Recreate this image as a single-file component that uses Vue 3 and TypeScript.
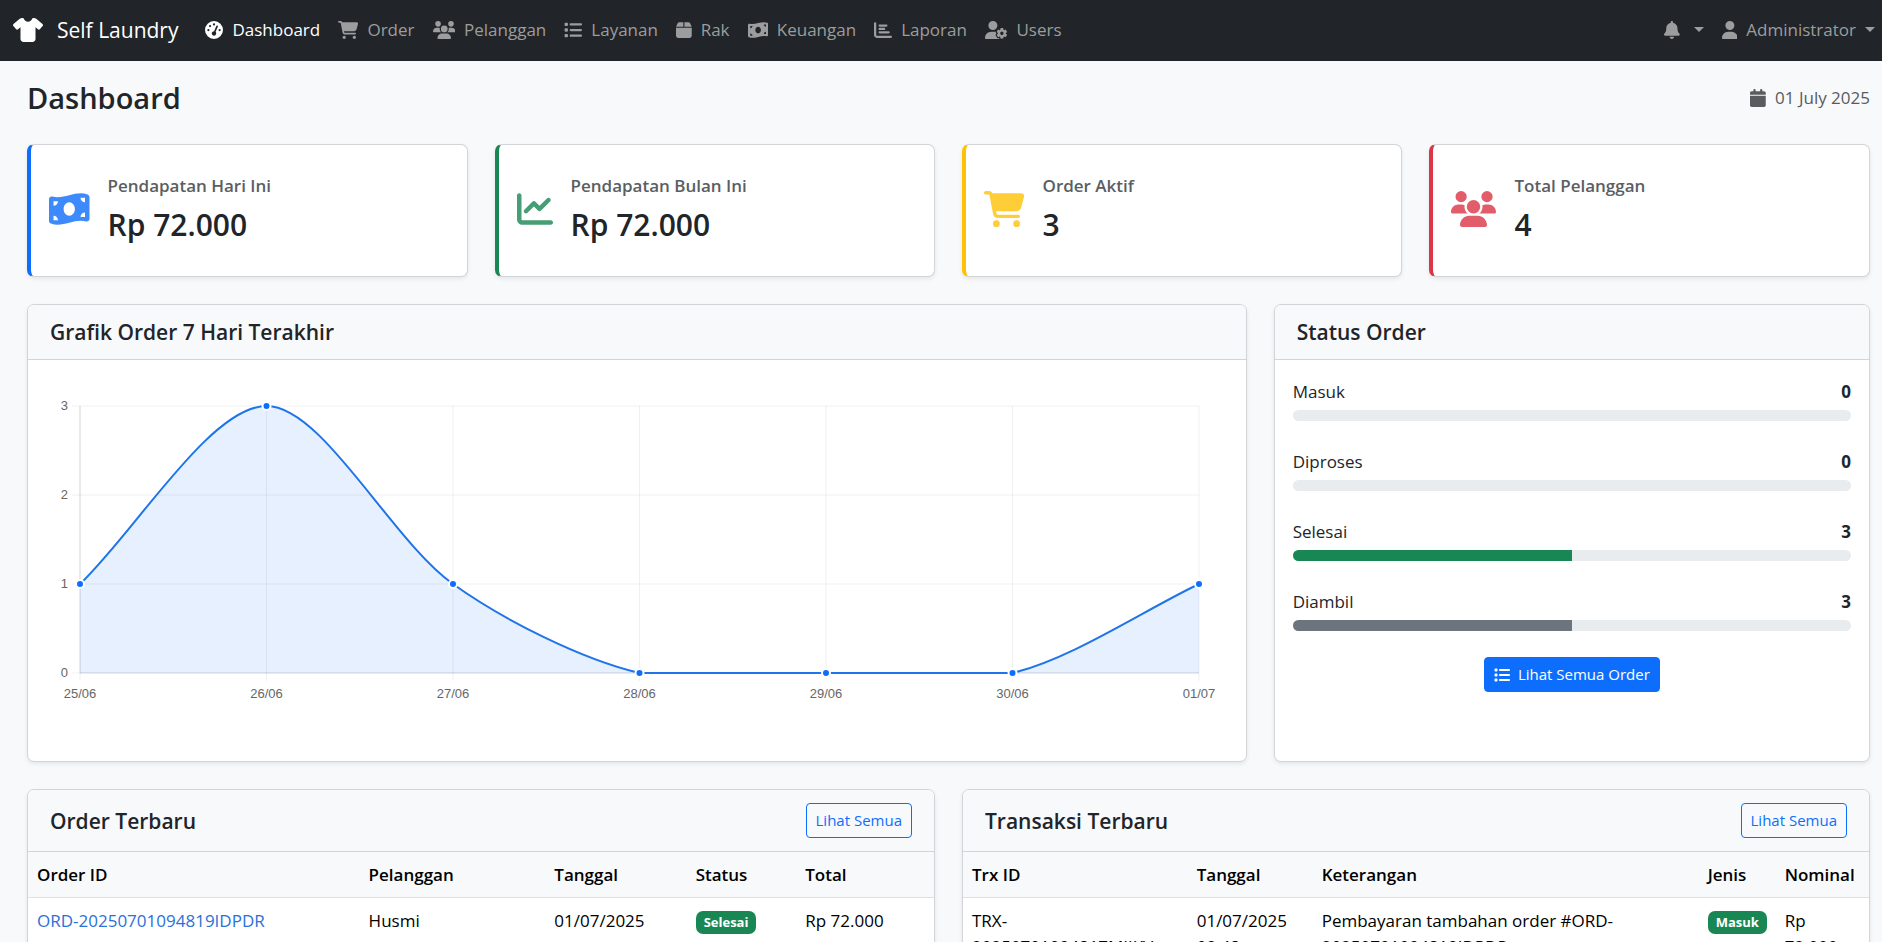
<script setup lang="ts">
import { computed, onBeforeUnmount, onMounted, ref } from 'vue'

interface Icon {
  width: number
  path: string
}

const icons: Record<string, Icon> = {
  shirt: { width: 640, path: 'M211.8 0c7.8 0 14.3 5.7 16.7 13.2C240.8 51.9 277.1 80 320 80s79.2-28.1 91.5-66.8C413.9 5.7 420.4 0 428.2 0h12.6c22.5 0 44.2 7.9 61.5 22.3L628.5 127.4c6.6 5.5 10.7 13.5 11.4 22.1s-2.1 17.1-7.8 23.6l-56 64c-11.4 13.1-31.2 14.6-44.6 3.5L480 197.7V448c0 35.3-28.7 64-64 64H224c-35.3 0-64-28.7-64-64V197.7l-51.5 42.9c-13.3 11.1-33.1 9.6-44.6-3.5l-56-64c-5.7-6.5-8.5-15-7.8-23.6s4.8-16.6 11.4-22.1L137.7 22.3C155 7.9 176.7 0 199.2 0h12.6z' },
  gauge: { width: 512, path: 'M0 256a256 256 0 1 1 512 0A256 256 0 1 1 0 256zM288 96a32 32 0 1 0 -64 0 32 32 0 1 0 64 0zM256 416c35.3 0 64-28.7 64-64c0-17.4-6.9-33.1-18.1-44.6L366 161.7c5.3-12.1-.2-26.3-12.3-31.6s-26.3 .2-31.6 12.3L257.9 288c-.6 0-1.3 0-1.9 0c-35.3 0-64 28.7-64 64s28.7 64 64 64zM176 144a32 32 0 1 0 -64 0 32 32 0 1 0 64 0zM96 288a32 32 0 1 0 0-64 32 32 0 1 0 0 64zm352-32a32 32 0 1 0 -64 0 32 32 0 1 0 64 0z' },
  cart: { width: 576, path: 'M0 24C0 10.7 10.7 0 24 0H69.5c22 0 41.5 12.8 50.6 32h411c26.3 0 45.5 25 38.6 50.4l-41 152.3c-8.5 31.4-37 53.3-69.5 53.3H170.7l5.4 28.5c2.2 11.3 12.1 19.5 23.6 19.5H488c13.3 0 24 10.7 24 24s-10.7 24-24 24H199.7c-34.6 0-64.3-24.6-70.7-58.5L77.4 54.5c-.7-3.8-4-6.5-7.9-6.5H24C10.7 48 0 37.3 0 24zM128 464a48 48 0 1 1 96 0 48 48 0 1 1 -96 0zm336-48a48 48 0 1 1 0 96 48 48 0 1 1 0-96z' },
  users: { width: 640, path: 'M144 0a80 80 0 1 1 0 160A80 80 0 1 1 144 0zM512 0a80 80 0 1 1 0 160A80 80 0 1 1 512 0zM0 298.7C0 239.8 47.8 192 106.7 192h42.7c15.9 0 31 3.5 44.6 9.7c-1.3 7.2-1.9 14.7-1.9 22.3c0 38.2 16.8 72.5 43.3 96c-.2 0-.4 0-.7 0H21.3C9.6 320 0 310.4 0 298.7zM405.3 320c-.2 0-.4 0-.7 0c26.6-23.5 43.3-57.8 43.3-96c0-7.6-.7-15-1.9-22.3c13.6-6.3 28.7-9.7 44.6-9.7h42.7C592.2 192 640 239.8 640 298.7c0 11.8-9.6 21.3-21.3 21.3H405.3zM224 224a96 96 0 1 1 192 0 96 96 0 1 1 -192 0zM128 485.3C128 411.7 187.7 352 261.3 352H378.7C452.3 352 512 411.7 512 485.3c0 14.7-11.9 26.7-26.7 26.7H154.7c-14.7 0-26.7-11.9-26.7-26.7z' },
  list: { width: 512, path: 'M40 48C26.7 48 16 58.7 16 72v48c0 13.3 10.7 24 24 24H88c13.3 0 24-10.7 24-24V72c0-13.3-10.7-24-24-24H40zM192 64c-17.7 0-32 14.3-32 32s14.3 32 32 32H480c17.7 0 32-14.3 32-32s-14.3-32-32-32H192zm0 160c-17.7 0-32 14.3-32 32s14.3 32 32 32H480c17.7 0 32-14.3 32-32s-14.3-32-32-32H192zm0 160c-17.7 0-32 14.3-32 32s14.3 32 32 32H480c17.7 0 32-14.3 32-32s-14.3-32-32-32H192zM16 232v48c0 13.3 10.7 24 24 24H88c13.3 0 24-10.7 24-24V232c0-13.3-10.7-24-24-24H40c-13.3 0-24 10.7-24 24zM40 368c-13.3 0-24 10.7-24 24v48c0 13.3 10.7 24 24 24H88c13.3 0 24-10.7 24-24V392c0-13.3-10.7-24-24-24H40z' },
  box: { width: 448, path: 'M50.7 58.5L0 160H208V32H93.7C75.5 32 58.9 42.3 50.7 58.5zM240 160H448L397.3 58.5C389.1 42.3 372.5 32 354.3 32H240V160zm208 32H0V416c0 35.3 28.7 64 64 64H384c35.3 0 64-28.7 64-64V192z' },
  money: { width: 576, path: 'M0 112.5V422.3c0 18 10.1 35 27 41.3c87 32.5 174 10.3 261-11.9c79.8-20.3 159.6-40.7 239.3-18.9c23 6.3 48.7-9.5 48.7-33.4V89.7c0-18-10.1-35-27-41.3C462 15.9 375 38.1 288 60.3C208.2 80.6 128.4 100.9 48.7 79.1C25.6 72.8 0 88.6 0 112.5zM288 352c-44.2 0-80-43-80-96s35.8-96 80-96s80 43 80 96s-35.8 96-80 96zM64 352c35.3 0 64 28.7 64 64H64V352zm64-208c0 35.3-28.7 64-64 64V144h64zM512 304v64H448c0-35.3 28.7-64 64-64zM448 96h64v64c-35.3 0-64-28.7-64-64z' },
  chartBar: { width: 512, path: 'M32 32c17.7 0 32 14.3 32 32V400c0 8.8 7.2 16 16 16H480c17.7 0 32 14.3 32 32s-14.3 32-32 32H80c-44.2 0-80-35.8-80-80V64C0 46.3 14.3 32 32 32zm96 96c0-17.7 14.3-32 32-32l192 0c17.7 0 32 14.3 32 32s-14.3 32-32 32H160c-17.7 0-32-14.3-32-32zm32 64H288c17.7 0 32 14.3 32 32s-14.3 32-32 32H160c-17.7 0-32-14.3-32-32s14.3-32 32-32zm0 96H416c17.7 0 32 14.3 32 32s-14.3 32-32 32H160c-17.7 0-32-14.3-32-32s14.3-32 32-32z' },
  chartLine: { width: 512, path: 'M64 64c0-17.7-14.3-32-32-32S0 46.3 0 64V400c0 44.2 35.8 80 80 80H480c17.7 0 32-14.3 32-32s-14.3-32-32-32H80c-8.8 0-16-7.2-16-16V64zm406.6 86.6c12.5-12.5 12.5-32.8 0-45.3s-32.8-12.5-45.3 0L320 210.7l-57.4-57.4c-12.5-12.5-32.8-12.5-45.3 0l-112 112c-12.5 12.5-12.5 32.8 0 45.3s32.8 12.5 45.3 0L240 221.3l57.4 57.4c12.5 12.5 32.8 12.5 45.3 0l128-128z' },
  userGear: { width: 640, path: 'M224 0a128 128 0 1 1 0 256A128 128 0 1 1 224 0zM178.3 304h91.4c11.8 0 23.4 1.2 34.5 3.3c-2.1 18.5 7.4 35.6 21.8 44.8c-16.6 10.6-26.7 31.6-20 53.3c4 12.9 9.4 25.5 16.4 37.6s15.2 23.1 24.4 33c15.7 16.9 39.6 18.4 57.2 8.7v.9c0 9.2 2.7 18.5 7.9 26.3H29.7C13.3 512 0 498.7 0 482.3C0 383.8 79.8 304 178.3 304zM436 218.2c0-7 4.5-13.3 11.3-14.8c10.5-2.4 21.5-3.7 32.7-3.7s22.2 1.3 32.7 3.7c6.8 1.5 11.3 7.8 11.3 14.8v30.6c7.9 3.4 15.4 7.7 22.3 12.8l24.9-14.3c6.1-3.5 13.7-2.7 18.5 2.4c7.6 8.1 14.3 17.2 20.1 27.2s10.3 20.4 13.5 31c2.1 6.7-1.1 13.7-7.2 17.2l-25 14.4c.4 4 .7 8.1 .7 12.3s-.2 8.2-.7 12.3l25 14.4c6.1 3.5 9.2 10.5 7.2 17.2c-3.3 10.6-7.8 21-13.5 31s-12.5 19.1-20.1 27.2c-4.8 5.1-12.5 5.9-18.5 2.4l-24.9-14.3c-6.9 5.1-14.3 9.4-22.3 12.8l0 30.6c0 7-4.5 13.3-11.3 14.8c-10.5 2.4-21.5 3.7-32.7 3.7s-22.2-1.3-32.7-3.7c-6.8-1.5-11.3-7.8-11.3-14.8V454.8c-8-3.4-15.6-7.7-22.5-12.9l-24.7 14.3c-6.1 3.5-13.7 2.7-18.5-2.4c-7.6-8.1-14.3-17.2-20.1-27.2s-10.3-20.4-13.5-31c-2.1-6.7 1.1-13.7 7.2-17.2l24.8-14.3c-.4-4.1-.7-8.2-.7-12.4s.2-8.3 .7-12.4L343.8 325c-6.1-3.5-9.2-10.5-7.2-17.2c3.3-10.6 7.7-21 13.5-31s12.5-19.1 20.1-27.2c4.8-5.1 12.4-5.9 18.5-2.4l24.8 14.3c6.9-5.1 14.5-9.4 22.5-12.9V218.2zm92.1 133.5a48.1 48.1 0 1 0 -96.1 0 48.1 48.1 0 1 0 96.1 0z' },
  bell: { width: 448, path: 'M224 0c-17.7 0-32 14.3-32 32V51.2C119 66 64 130.6 64 208v18.8c0 47-17.3 92.4-48.5 127.6l-7.4 8.3c-8.4 9.4-10.4 22.9-5.3 34.4S19.4 416 32 416H416c12.6 0 24-7.4 29.2-18.9s3.1-25-5.3-34.4l-7.4-8.3C401.3 319.2 384 273.9 384 226.8V208c0-77.4-55-142-128-156.8V32c0-17.7-14.3-32-32-32zm45.3 493.3c12-12 18.7-28.3 18.7-45.3H224 160c0 17 6.7 33.3 18.7 45.3s28.3 18.7 45.3 18.7s33.3-6.7 45.3-18.7z' },
  user: { width: 448, path: 'M224 256A128 128 0 1 0 224 0a128 128 0 1 0 0 256zm-45.7 48C79.8 304 0 383.8 0 482.3C0 498.7 13.3 512 29.7 512H418.3c16.4 0 29.7-13.3 29.7-29.7C448 383.8 368.2 304 269.7 304H178.3z' },
  calendar: { width: 448, path: 'M96 32V64H48C21.5 64 0 85.5 0 112v48H448V112c0-26.5-21.5-48-48-48H352V32c0-17.7-14.3-32-32-32s-32 14.3-32 32V64H160V32c0-17.7-14.3-32-32-32S96 14.3 96 32zM448 192H0V464c0 26.5 21.5 48 48 48H400c26.5 0 48-21.5 48-48V192z' },
}

const viewBox = (name: string) => `0 0 ${icons[name].width} 512`

const navItems = [
  { label: 'Dashboard', icon: 'gauge', active: true },
  { label: 'Order', icon: 'cart', active: false },
  { label: 'Pelanggan', icon: 'users', active: false },
  { label: 'Layanan', icon: 'list', active: false },
  { label: 'Rak', icon: 'box', active: false },
  { label: 'Keuangan', icon: 'money', active: false },
  { label: 'Laporan', icon: 'chartBar', active: false },
  { label: 'Users', icon: 'userGear', active: false },
]

const stats = [
  { label: 'Pendapatan Hari Ini', value: 'Rp 72.000', icon: 'money', tone: 'primary' },
  { label: 'Pendapatan Bulan Ini', value: 'Rp 72.000', icon: 'chartLine', tone: 'success' },
  { label: 'Order Aktif', value: '3', icon: 'cart', tone: 'warning' },
  { label: 'Total Pelanggan', value: '4', icon: 'users', tone: 'danger' },
]

const statuses = [
  { label: 'Masuk', count: 0, tone: 'info' },
  { label: 'Diproses', count: 0, tone: 'info' },
  { label: 'Selesai', count: 3, tone: 'success' },
  { label: 'Diambil', count: 3, tone: 'secondary' },
]
const statusTotal = statuses.reduce((sum, s) => sum + s.count, 0)
const share = (count: number) => (count / statusTotal) * 100

const orders = [
  { id: 'ORD-20250701094819IDPDR', customer: 'Husmi', date: '01/07/2025', status: 'Selesai', total: 'Rp 72.000' },
]
const transactions = [
  { id: 'TRX-20250701094817MIJKV', date: '01/07/2025 09:48', note: 'Pembayaran tambahan order #ORD-20250701094819IDPDR', kind: 'Masuk', amount: 'Rp 72.000' },
]

/* Line chart */
const days = ['25/06', '26/06', '27/06', '28/06', '29/06', '30/06', '01/07']
const counts = [1, 3, 1, 0, 0, 0, 1]
const ticks = [3, 2, 1, 0]
const chartHeight = 360
const area = { left: 34, right: 29, top: 28, bottom: 295 }
const tension = 0.3

const chartBox = ref<HTMLElement | null>(null)
const chartWidth = ref(1182)
let observer: ResizeObserver | undefined

onMounted(() => {
  if (!chartBox.value) return
  chartWidth.value = chartBox.value.clientWidth
  observer = new ResizeObserver(() => {
    if (chartBox.value) chartWidth.value = chartBox.value.clientWidth
  })
  observer.observe(chartBox.value)
})
onBeforeUnmount(() => observer?.disconnect())

const yOf = (value: number) => area.bottom - (value / 3) * (area.bottom - area.top)
const plotRight = computed(() => chartWidth.value - area.right)
const points = computed(() =>
  counts.map((value, i) => ({
    x: area.left + (i * (plotRight.value - area.left)) / (counts.length - 1),
    y: yOf(value),
  })),
)

const linePath = computed(() => {
  const pts = points.value
  const clamp = (y: number) => Math.min(area.bottom, Math.max(area.top, y))
  const controls = pts.map((p, i) => {
    const prev = pts[Math.max(i - 1, 0)]
    const next = pts[Math.min(i + 1, pts.length - 1)]
    const before = Math.hypot(p.x - prev.x, p.y - prev.y)
    const after = Math.hypot(next.x - p.x, next.y - p.y)
    const a = (tension * before) / (before + after)
    const b = (tension * after) / (before + after)
    return {
      inX: p.x - a * (next.x - prev.x),
      inY: clamp(p.y - a * (next.y - prev.y)),
      outX: p.x + b * (next.x - prev.x),
      outY: clamp(p.y + b * (next.y - prev.y)),
    }
  })
  return pts
    .map((p, i) =>
      i === 0
        ? `M${p.x} ${p.y}`
        : `C${controls[i - 1].outX} ${controls[i - 1].outY} ${controls[i].inX} ${controls[i].inY} ${p.x} ${p.y}`,
    )
    .join(' ')
})
const fillPath = computed(() => `${linePath.value} V${area.bottom} H${area.left} Z`)
</script>

<template>
  <div class="page">
    <header class="navbar">
      <a href="#" class="brand">
        <svg class="brand-icon" :viewBox="viewBox('shirt')" aria-hidden="true"><path :d="icons.shirt.path" /></svg>
        <span>Self Laundry</span>
      </a>
      <nav class="nav-links" aria-label="Menu utama">
        <a v-for="item in navItems" :key="item.label" href="#" class="nav-link" :class="{ active: item.active }">
          <svg class="icon" :viewBox="viewBox(item.icon)" aria-hidden="true"><path :d="icons[item.icon].path" /></svg>
          <span>{{ item.label }}</span>
        </a>
      </nav>
      <div class="nav-user">
        <button type="button" class="nav-link" aria-label="Notifikasi">
          <svg class="icon" :viewBox="viewBox('bell')" aria-hidden="true"><path :d="icons.bell.path" /></svg>
          <span class="caret caret-wide"></span>
        </button>
        <button type="button" class="nav-link">
          <svg class="icon" :viewBox="viewBox('user')" aria-hidden="true"><path :d="icons.user.path" /></svg>
          <span>Administrator</span>
          <span class="caret"></span>
        </button>
      </div>
    </header>

    <main class="content">
      <div class="page-head">
        <h1>Dashboard</h1>
        <div class="today">
          <svg class="icon" :viewBox="viewBox('calendar')" aria-hidden="true"><path :d="icons.calendar.path" /></svg>
          <span>01 July 2025</span>
        </div>
      </div>

      <div class="grid">
        <section v-for="s in stats" :key="s.label" class="card stat" :class="s.tone">
          <svg class="stat-icon" :viewBox="viewBox(s.icon)" aria-hidden="true"><path :d="icons[s.icon].path" /></svg>
          <div>
            <h2 class="stat-label">{{ s.label }}</h2>
            <p class="stat-value">{{ s.value }}</p>
          </div>
        </section>

        <section class="card chart-card">
          <div class="card-head"><h2>Grafik Order 7 Hari Terakhir</h2></div>
          <div class="chart-body">
            <div ref="chartBox" class="chart-box">
              <svg class="chart" :width="chartWidth" :height="chartHeight" role="img" aria-label="Grafik order 7 hari terakhir">
                <g class="grid-lines">
                  <line v-for="t in ticks" :key="t" :x1="area.left - 8" :x2="plotRight" :y1="yOf(t)" :y2="yOf(t)" />
                  <line v-for="(p, i) in points" :key="i" :x1="p.x" :x2="p.x" :y1="area.top" :y2="area.bottom + 8" />
                </g>
                <path class="axis" :d="`M${area.left} ${area.top}V${area.bottom}H${plotRight}`" />
                <path class="fill" :d="fillPath" />
                <path class="line" :d="linePath" />
                <circle v-for="(p, i) in points" :key="i" class="dot" :cx="p.x" :cy="p.y" r="4" />
                <g class="labels">
                  <text v-for="t in ticks" :key="t" :x="area.left - 12" :y="yOf(t) + 4" text-anchor="end">{{ t }}</text>
                  <text v-for="(p, i) in points" :key="i" :x="p.x" :y="area.bottom + 25" text-anchor="middle">{{ days[i] }}</text>
                </g>
              </svg>
            </div>
          </div>
        </section>

        <section class="card status-card">
          <div class="card-head"><h2>Status Order</h2></div>
          <div class="status-body">
            <div v-for="s in statuses" :key="s.label" class="status">
              <div class="status-row">
                <span>{{ s.label }}</span>
                <strong>{{ s.count }}</strong>
              </div>
              <div class="track" role="progressbar" :aria-label="s.label" :aria-valuenow="s.count" aria-valuemin="0" :aria-valuemax="statusTotal">
                <div class="bar" :class="s.tone" :style="{ width: share(s.count) + '%' }"></div>
              </div>
            </div>
            <a href="#" class="btn btn-solid">
              <svg class="btn-icon" :viewBox="viewBox('list')" aria-hidden="true"><path :d="icons.list.path" /></svg>
              <span>Lihat Semua Order</span>
            </a>
          </div>
        </section>

        <section class="card table-card">
          <div class="card-head">
            <h2>Order Terbaru</h2>
            <a href="#" class="btn btn-outline">Lihat Semua</a>
          </div>
          <table class="orders">
            <thead>
              <tr>
                <th scope="col">Order ID</th>
                <th scope="col">Pelanggan</th>
                <th scope="col">Tanggal</th>
                <th scope="col">Status</th>
                <th scope="col">Total</th>
              </tr>
            </thead>
            <tbody>
              <tr v-for="o in orders" :key="o.id">
                <td><a href="#" class="link">{{ o.id }}</a></td>
                <td>{{ o.customer }}</td>
                <td>{{ o.date }}</td>
                <td><span class="badge">{{ o.status }}</span></td>
                <td>{{ o.total }}</td>
              </tr>
            </tbody>
          </table>
        </section>

        <section class="card table-card">
          <div class="card-head">
            <h2>Transaksi Terbaru</h2>
            <a href="#" class="btn btn-outline">Lihat Semua</a>
          </div>
          <table class="transactions">
            <thead>
              <tr>
                <th scope="col">Trx ID</th>
                <th scope="col">Tanggal</th>
                <th scope="col">Keterangan</th>
                <th scope="col">Jenis</th>
                <th scope="col">Nominal</th>
              </tr>
            </thead>
            <tbody>
              <tr v-for="t in transactions" :key="t.id">
                <td>{{ t.id }}</td>
                <td>{{ t.date }}</td>
                <td>{{ t.note }}</td>
                <td><span class="badge">{{ t.kind }}</span></td>
                <td>{{ t.amount }}</td>
              </tr>
            </tbody>
          </table>
        </section>
      </div>
    </main>
  </div>
</template>

<style>
body {
  margin: 0;
  background: #f8f9fa;
}
</style>

<style scoped>
.page {
  --blue: #0d6efd;
  --green: #198754;
  --yellow: #ffc107;
  --red: #dc3545;
  --grey: #6c757d;
  --line: #d2d4d7;
  color: #212529;
  font-family: "Segoe UI", "Open Sans", "Noto Sans", sans-serif;
  font-size: 17px;
  line-height: 26px;
}

.page *,
.page *::before,
.page *::after {
  box-sizing: border-box;
}

h1,
h2,
p {
  margin: 0;
  font-weight: 600;
}

a {
  color: inherit;
  text-decoration: none;
}

svg {
  display: block;
  flex: none;
}

.icon,
.brand-icon,
.stat-icon,
.btn-icon {
  fill: currentColor;
  width: auto;
}

.icon {
  height: 18px;
}

/* Navbar */
.navbar {
  display: flex;
  align-items: center;
  height: 61px;
  padding: 0 7px 2px 13px;
  background: #212529;
}

.brand {
  display: flex;
  align-items: center;
  gap: 14px;
  margin-right: 18px;
  color: #fff;
  font-size: 21px;
  line-height: 30px;
}

.brand-icon {
  height: 24px;
}

.nav-links,
.nav-user {
  display: flex;
}

.nav-user {
  margin-left: auto;
}

.nav-link {
  display: flex;
  align-items: center;
  gap: 9px;
  padding: 8px 9px;
  border: 0;
  background: none;
  color: #9b9d9e;
  font: inherit;
  cursor: pointer;
}

.nav-user .nav-link:last-child {
  padding-right: 0;
}

.nav-link.active {
  color: #fff;
}

.caret {
  border: 5px solid transparent;
  border-top-color: currentColor;
  border-bottom: 0;
}

.caret-wide {
  margin-left: 5px;
}

/* Page heading */
.content {
  padding: 0 12px 27px 27px;
}

.page-head {
  display: flex;
  align-items: center;
  justify-content: space-between;
  height: 83px;
  padding-bottom: 9px;
}

h1 {
  font-size: 29px;
  line-height: 38px;
}

.today {
  display: flex;
  align-items: center;
  gap: 9px;
  color: #595c5f;
}

/* Cards */
.grid {
  display: grid;
  grid-template-columns: repeat(12, minmax(0, 1fr));
  gap: 27px;
}

.card {
  overflow: hidden;
  border: 1px solid var(--line);
  border-radius: 7px;
  background: #fff;
  box-shadow: 0 2px 4px rgba(0, 0, 0, 0.08);
}

.card-head {
  display: flex;
  align-items: center;
  justify-content: space-between;
  min-height: 55px;
  padding: 13px 22px;
  border-bottom: 1px solid var(--line);
  background: #f8f9fb;
}

.card-head h2 {
  font-size: 21px;
  line-height: 26px;
}

.stat {
  grid-column: span 3;
  display: flex;
  align-items: center;
  gap: 18px;
  min-height: 133px;
  padding: 0 18px 3px;
  border-left-width: 4px;
}

.stat-icon {
  height: 36px;
  opacity: 0.8;
}

.stat-label {
  margin-bottom: 8px;
  color: #5a5e62;
  font-size: 17px;
  line-height: 24px;
}

.stat-value {
  font-size: 30px;
  line-height: 38px;
}

.stat.primary {
  border-left-color: var(--blue);
}
.stat.success {
  border-left-color: var(--green);
}
.stat.warning {
  border-left-color: var(--yellow);
}
.stat.danger {
  border-left-color: var(--red);
}
.primary .stat-icon {
  color: var(--blue);
}
.success .stat-icon {
  color: var(--green);
}
.warning .stat-icon {
  color: var(--yellow);
}
.danger .stat-icon {
  color: var(--red);
}

/* Chart */
.chart-card {
  grid-column: span 8;
}

.chart-body {
  padding: 18px 18px 23px;
}

.chart-box {
  height: 360px;
  overflow: hidden;
}

.grid-lines {
  stroke: rgba(0, 0, 0, 0.06);
}

.axis {
  fill: none;
  stroke: rgba(0, 0, 0, 0.12);
}

.fill {
  fill: rgba(13, 110, 253, 0.1);
}

.line {
  fill: none;
  stroke: #1f74ea;
  stroke-width: 2;
}

.dot {
  fill: var(--blue);
  stroke: #fff;
  stroke-width: 2;
}

.labels {
  fill: #666;
  font-family: "Liberation Sans", Arial, sans-serif;
  font-size: 13px;
}

/* Status list */
.status-card {
  grid-column: span 4;
}

.status-body {
  display: flex;
  flex-direction: column;
  padding: 19px 18px;
}

.status {
  margin-bottom: 28px;
}

.status:nth-child(4) {
  margin-bottom: 26px;
}

.status-row {
  display: flex;
  justify-content: space-between;
  margin-bottom: 5px;
}

.track {
  height: 11px;
  overflow: hidden;
  border-radius: 6px;
  background: #e9ecef;
}

.bar {
  height: 100%;
}
.bar.info {
  background: #0dcaf0;
}
.bar.success {
  background: var(--green);
}
.bar.secondary {
  background: var(--grey);
}

/* Buttons */
.btn {
  display: inline-flex;
  align-items: center;
  gap: 8px;
  padding: 4px 9px;
  border: 1px solid var(--blue);
  border-radius: 4px;
  font-size: 15px;
  line-height: 25px;
}

.btn-icon {
  height: 16px;
}

.btn-solid {
  align-self: center;
  background: var(--blue);
  color: #fff;
}

.btn-outline {
  color: var(--blue);
}

/* Tables */
.table-card {
  grid-column: span 6;
}

table {
  width: 100%;
  border-collapse: collapse;
  table-layout: fixed;
  color: #000;
}

th,
td {
  padding: 10px 9px 9px;
  border-bottom: 1px solid #dee2e6;
  text-align: left;
  vertical-align: top;
}

th {
  background: #f8f9fb;
  font-weight: 600;
}

.orders th:nth-child(1) {
  width: 36.6%;
}
.orders th:nth-child(2) {
  width: 20.5%;
}
.orders th:nth-child(3) {
  width: 15.6%;
}
.orders th:nth-child(4) {
  width: 12.1%;
}
.transactions th:nth-child(1) {
  width: 24.8%;
}
.transactions th:nth-child(2) {
  width: 13.8%;
}
.transactions th:nth-child(3) {
  width: 42.6%;
}
.transactions th:nth-child(4) {
  width: 8.5%;
}

.link {
  color: #2a71d8;
}

.badge {
  display: inline-block;
  padding: 5px 8px;
  border-radius: 7px;
  background: var(--green);
  color: #fff;
  font-size: 13px;
  font-weight: 700;
  line-height: 13px;
}
</style>
